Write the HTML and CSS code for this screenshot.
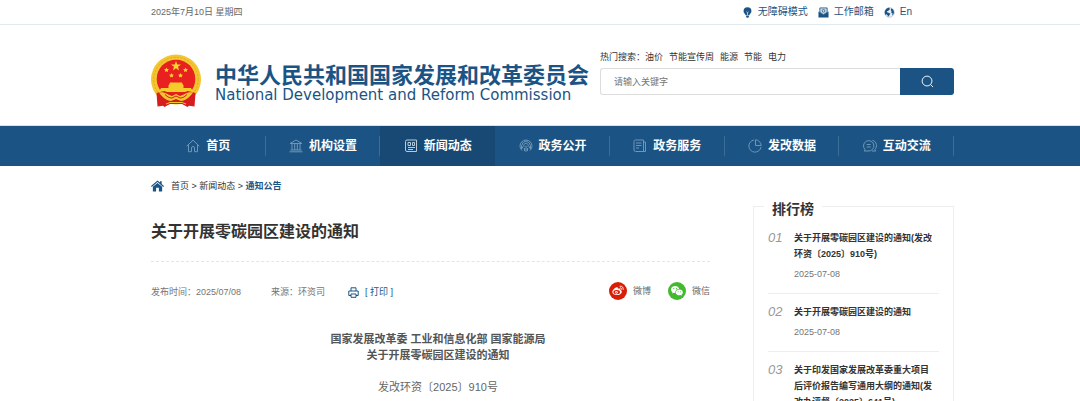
FILE: index.html
```html
<!DOCTYPE html>
<html lang="zh-CN">
<head>
<meta charset="utf-8">
<title>关于开展零碳园区建设的通知</title>
<link rel="stylesheet" href="styles.css">
</head>
<body>
<div class="topbar">
  <div class="wrap topbar-row">
    <span class="date">2025年7月10日 星期四</span>
    <div class="tools">
      <a href="#"><svg class="tool-icon" viewBox="0 0 12 12"><path fill="#1b5484" d="M6 .3a4.300 4.300 0 0 0-4.300 4.300C1.700 6.500 3.500 7.300 4 9h4c.5-1.700 2.300-2.500 2.300-4.400A4.300 4.300 0 0 0 6 .3zM4.500 9.500h3v1L6.800 11.800H5.200l-.7-1.300z"/><path stroke="#fff" stroke-width=".7" fill="none" d="M6 8.800V6M4.800 5.200 6 6.200l1.200-1"/></svg>无障碍模式</a>
      <a href="#"><svg class="tool-icon" viewBox="0 0 12 12"><path fill="#1b5484" d="M.5 5 6 8.500 11.500 5v6.500H.500z"/><path fill="#cfdde8" stroke="#1b5484" stroke-width=".9" d="M2 5.800V1h8v4.800L6 8.200z"/><circle cx="6" cy="4.200" r="1.500" fill="none" stroke="#1b5484" stroke-width=".8"/></svg>工作邮箱</a>
      <a href="#"><svg class="tool-icon" viewBox="0 0 12 12"><circle cx="6" cy="6" r="5.200" fill="#e4edf4" stroke="#8eabc3" stroke-width=".6"/><path fill="#1b5484" d="M5.800.700C3 .6.800 3 .8 6c0 1 .3 2 .8 2.700L3 8l1 1 .2 1.800 1.400-1.500L7 7.400 5 6.200 3.700 6 3 4.800l1.700-.6L6.400 2.500zM8 1.400l-.7 1.800 1 1.300-.6 1.400 1.500.8-.2 2.500 1.300-1.400A5 5 0 0 0 8 1.400z"/></svg>En</a>
    </div>
  </div>
</div>

<header class="wrap header">
  <a class="brand" href="#">
    <svg class="emblem" viewBox="0 0 50 54" aria-hidden="true">
      <circle cx="25" cy="25.500" r="25" fill="#f3c52f"/>
      <circle cx="25" cy="25.500" r="22.200" fill="none" stroke="#e3ab22" stroke-width="1" stroke-dasharray="2 1.500"/>
      <circle cx="25" cy="25" r="19.300" fill="#e8201f"/>
      <path fill="#f8d72e" d="m25 7 1.250 3.500 3.750.1-3 2.250 1.100 3.550L25 14.300l-3.100 2.100 1.100-3.550-3-2.250 3.750-.1z"/>
      <g fill="#f8d72e">
        <path id="star" d="m15.500 13.500.7 1.500 1.700.2-1.200 1.200.3 1.700-1.500-.8-1.500.8.3-1.700-1.200-1.200 1.700-.2z"/>
        <use href="#star" x="19"/><use href="#star" x="5" y="5.500"/><use href="#star" x="14" y="5.500"/>
      </g>
      <path fill="#f6cb2c" d="M19 28.500h12l1 2.500H18zM17.500 31h15v3h-15zM10 34h30l2 4H8z"/>
      <path fill="#d71d1d" d="M5.500 39 13 37l12 4 12-4 7.500 2-1 13.500-5.500-.7-1.500 1.200-5.500-3H19l-5.500 3-1.500-1.200-5.500.7z"/>
      <path fill="#f3c52f" d="M8 38.500c6-1 9 2.500 13 3.500l4-2 4 2c4-1 7-4.500 13-3.500-3 5-8 8-12 8.500l-5-2-5 2C16 46.500 11 43.500 8 38.500z"/>
      <path fill="none" stroke="#d71d1d" stroke-width="1" d="M14 40.500c3 3 5 3.500 7 3.500l4-2 4 2c2 0 4-.5 7-3.500"/>
      <path fill="none" stroke="#f3c52f" stroke-width="1" d="M15 50l4-1.500h12l4 1.500"/>
    </svg>
    <span class="brand-text">
      <span class="brand-cn">中华人民共和国国家发展和改革委员会</span>
      <span class="brand-en" lang="en">National Development and Reform Commission</span>
    </span>
  </a>
  <div class="search">
    <div class="hot"><span>热门搜索：</span><a href="#">油价</a><a href="#">节能宣传周</a><a href="#">能源</a><a href="#">节能</a><a href="#">电力</a></div>
    <form class="search-form">
      <input class="search-input" type="text" placeholder="请输入关键字" aria-label="请输入关键字">
      <button class="search-button" type="button" aria-label="搜索"><svg viewBox="0 0 14 14"><circle cx="6.500" cy="6.500" r="5.300"/><path d="m10.300 10.300 2.700 2.700"/></svg></button>
    </form>
  </div>
</header>

<nav class="nav">
  <div class="wrap nav-row">
    <a class="nav-item" href="#"><svg class="nav-icon" viewBox="0 0 14 14"><path d="M.7 7.200 7 1.200l6.300 6M2.500 6v6.700h3V9a1.500 1.500 0 0 1 3 0v3.700h3V6"/></svg>首页</a>
    <a class="nav-item" href="#"><svg class="nav-icon" viewBox="0 0 14 14"><path d="M1 4.500 7 1l6 3.500zM.5 12.800h13M1.500 11h11M3 5v6M5.700 5v6M8.300 5v6M11 5v6"/></svg>机构设置</a>
    <a class="nav-item active" href="#"><svg class="nav-icon" viewBox="0 0 14 14"><path d="M3 1h9.500v11.500H3A1.500 1.500 0 0 1 1.500 11V2.500A1.500 1.500 0 0 1 3 1zM4 3.500h2.500v3H4zM8.500 3.500h2v3h-2zM4 8.500h7M4 10.500h5"/></svg>新闻动态</a>
    <a class="nav-item" href="#"><svg class="nav-icon" viewBox="0 0 14 14"><path d="M3 11.500a6 6 0 1 1 8 0M4 9.500a4.200 4.200 0 1 1 6 0M5.200 8a2.300 2.300 0 1 1 3.600 0M7 6.500V13M5.500 9v3M8.500 9v3M2.500 7v3M11.500 7v3"/></svg>政务公开</a>
    <a class="nav-item" href="#"><svg class="nav-icon" viewBox="0 0 14 14"><path d="M2.500 1h8v11.500h-8A1.500 1.500 0 0 1 1 11V2.500A1.500 1.500 0 0 1 2.500 1zM10.500 3h2v9.500h-3M3 4h5.500M3 6.500h5.500M3 9h3"/></svg>政务服务</a>
    <a class="nav-item" href="#"><svg class="nav-icon" viewBox="0 0 14 14"><path d="M6 1a6.100 6.100 0 1 0 7 7M7.500.8v5.700h5.700A6 6 0 0 0 7.500.8z"/></svg>发改数据</a>
    <a class="nav-item" href="#"><svg class="nav-icon" viewBox="0 0 14 14"><path d="M2 10.500A5.200 5.200 0 1 1 5 12H1.200zM9.500 1.300c4.500 1.200 5 6.700 2.500 9l.8 1.700H9M3.700 5.500h4M3.700 8h4"/></svg>互动交流</a>
  </div>
</nav>

<main class="wrap page">
  <article class="article">
    <div class="crumbs">
      <svg class="home-icon" viewBox="0 0 14 12"><path fill="#1b5484" d="M7 0 0 6l.8 1L7 1.800 13.200 7l.8-1-2.500-2.200V.8H9.700v1.500zM7 2.800l-5 4.100V12h3.500V8h3v4H12V6.900z"/></svg>
      <span><a href="#">首页</a> &gt; <a href="#">新闻动态</a> &gt; <a class="current" href="#">通知公告</a></span>
    </div>
    <h1 class="title">关于开展零碳园区建设的通知</h1>
    <div class="meta">
      <span class="published">发布时间：2025/07/08</span>
      <span class="source">来源：环资司</span>
      <a class="print" href="#"><svg class="print-icon" viewBox="0 0 11 11"><path d="M3 4V.8h5V4M3 8.500H.8V4h9.400v4.500H8M3 7h5v3.300H3z"/></svg>[ 打印 ]</a>
      <div class="share">
        <a href="#"><svg class="share-icon" viewBox="0 0 18 18"><circle cx="9" cy="9" r="9" fill="#d81e06"/><path fill="#fff" d="M7.600 5.300c1-.3 1.600.3 1.300 1.400 1.700-.6 2.900-.1 2.400 1.300 1 .3 1.600 1 1.500 1.900-.2 1.800-2.500 3.200-5 3.200-2.400 0-4.500-1.100-4.500-3 0-1.700 2.300-4.400 4.300-4.800z"/><ellipse cx="7.700" cy="10.100" rx="3.300" ry="2.200" fill="#d81e06"/><circle cx="7.400" cy="10.300" r="1.400" fill="#fff"/><circle cx="7.200" cy="10.500" r=".6" fill="#d81e06"/><path fill="none" stroke="#fff" stroke-width=".9" stroke-linecap="round" d="M11 4.200c2-.4 3.700 1.200 3.200 3.300M11.300 5.900c1-.1 1.500.5 1.300 1.300"/></svg>微博</a>
        <a href="#"><svg class="share-icon" viewBox="0 0 18 18"><circle cx="9" cy="9" r="9" fill="#43b92f"/><path fill="#fff" d="M7.200 4C4.800 4 3 5.500 3 7.500c0 1.100.6 2 1.500 2.700L4.200 11.500l1.500-.8c.6.2 1.200.2 1.700.2C7 8.300 8.800 6.900 11.200 7 10.800 5.200 9.200 4 7.200 4z"/><path fill="#fff" d="M11.300 7.500c-2 0-3.500 1.300-3.500 2.900s1.500 2.900 3.500 2.900l1.200-.2 1.300.7-.3-1.200c.8-.5 1.300-1.300 1.300-2.200 0-1.600-1.500-2.900-3.500-2.900z"/><g fill="#43b92f"><circle cx="5.800" cy="6.600" r=".6"/><circle cx="8.600" cy="6.600" r=".6"/><circle cx="10.200" cy="9.700" r=".5"/><circle cx="12.500" cy="9.700" r=".5"/></g></svg>微信</a>
      </div>
    </div>
    <div class="body">
      <p class="heading">国家发展改革委 工业和信息化部 国家能源局<br>关于开展零碳园区建设的通知</p>
      <p class="number">发改环资〔2025〕910号</p>
    </div>
  </article>

  <aside class="ranking">
    <h2 class="ranking-title">排行榜</h2>
    <ol class="ranking-list">
      <li><span class="rank">01</span><div class="entry"><a href="#">关于开展零碳园区建设的通知(发改环资〔2025〕910号)</a><time>2025-07-08</time></div></li>
      <li><span class="rank">02</span><div class="entry"><a href="#">关于开展零碳园区建设的通知</a><time>2025-07-08</time></div></li>
      <li><span class="rank">03</span><div class="entry"><a href="#">关于印发国家发展改革委重大项目后评价报告编写通用大纲的通知(发改办评督〔2025〕641号)</a></div></li>
    </ol>
  </aside>
</main>
</body>
</html>
```
FILE: styles.css
```css
* {
  box-sizing: border-box;
}

body {
  display: flex;
  flex-direction: column;
  height: 100vh;
  margin: 0;
  overflow: hidden;
  background: #fff;
  color: #333;
  font: 9px/16px "Liberation Sans", "Noto Sans CJK SC", sans-serif;
}

a {
  color: inherit;
  text-decoration: none;
}

svg {
  flex: none;
}

.topbar,
.nav,
.header,
.page {
  flex: none;
}

.wrap {
  width: 100%;
  max-width: 828px;
  margin: 0 auto;
  padding-left: 25px;
}

.topbar {
  border-bottom: 1px solid #e0eaf1;
}

.topbar-row {
  display: flex;
  align-items: center;
  justify-content: space-between;
  height: 24px;
}

.date {
  color: #666;
}

.tools {
  display: flex;
  gap: 10px;
  padding-right: 42px;
  color: #1b5484;
  font-size: 10px;
}

.tools a {
  display: flex;
  align-items: center;
  gap: 5px;
}

.tool-icon {
  width: 11px;
  height: 11px;
}

.header {
  display: flex;
  justify-content: space-between;
  height: 100px;
}

.brand {
  display: flex;
  align-items: flex-start;
  gap: 14px;
  padding-top: 29px;
  color: #1b5484;
  white-space: nowrap;
}

.emblem {
  width: 50px;
  height: 54px;
}

.brand-text {
  display: flex;
  flex-direction: column;
  padding-top: 10px;
}

.brand-cn {
  font-size: 22px;
  font-weight: 700;
  line-height: 24px;
}

.brand-en {
  font-family: "DejaVu Sans", sans-serif;
  font-size: 15px;
  line-height: 14px;
}

.search {
  width: 354px;
  padding-top: 24px;
}

.hot {
  display: flex;
  gap: 6px;
}

.hot span {
  margin-right: -6px;
}

.search-form {
  display: flex;
  height: 27px;
  margin-top: 3px;
}

.search-input {
  flex: 1;
  min-width: 0;
  padding: 0 13px;
  border: 1px solid #ddd;
  border-right: 0;
  border-radius: 3px 0 0 3px;
  font: inherit;
}

.search-input::placeholder {
  color: #757575;
}

.search-button {
  display: flex;
  align-items: center;
  justify-content: center;
  width: 54px;
  padding: 0;
  border: 0;
  border-radius: 0 3px 3px 0;
  background: #1b5484;
}

.search-button svg {
  width: 13px;
  height: 13px;
  fill: none;
  stroke: #fff;
  stroke-width: 1;
}

.nav {
  border-top: 1px solid #d7e4ec;
  background: #1b5484;
}

.nav-row {
  display: flex;
  height: 40px;
}

.nav-item {
  display: flex;
  flex: 1;
  align-items: center;
  justify-content: center;
  gap: 6px;
  background: linear-gradient(#3b6d97, #3b6d97) right center / 1px 20px no-repeat;
  color: #fff;
  font-size: 12px;
  font-weight: 700;
}

.nav-item.active {
  background: #174974;
}

.nav-icon {
  width: 14px;
  height: 14px;
  fill: none;
  stroke: #6e96b7;
  stroke-width: 1;
}

.active .nav-icon {
  stroke: #b5cadb;
}

.page {
  display: flex;
  align-items: flex-start;
  justify-content: space-between;
  gap: 43px;
}

.article {
  flex: 1;
}

.crumbs {
  display: flex;
  align-items: center;
  gap: 7px;
  padding-top: 12px;
}

.home-icon {
  width: 13px;
  height: 12px;
}

.current {
  color: #1b5484;
  font-weight: 700;
}

.title {
  margin: 0;
  padding: 26px 0 17px;
  border-bottom: 1px dashed #e5e5e5;
  font-size: 16px;
  line-height: 24px;
}

.meta {
  display: flex;
  align-items: flex-end;
  margin-top: 20px;
  color: #757575;
}

.published {
  margin-right: 30px;
}

.source {
  margin-right: 23px;
}

.print {
  display: flex;
  align-items: center;
  gap: 6px;
  color: #1b5484;
}

.print-icon {
  width: 11px;
  height: 11px;
  fill: none;
  stroke: #1b5484;
  stroke-width: 1;
}

.share {
  display: flex;
  gap: 17px;
  margin-left: auto;
  color: #666;
}

.share a {
  display: flex;
  align-items: center;
  gap: 6px;
}

.share-icon {
  width: 18px;
  height: 18px;
}

.body {
  padding: 31px 0 0 15px;
  color: #666;
  font-size: 11px;
  text-align: center;
}

.body p {
  margin: 0 0 16px;
}

.body .heading {
  color: #555;
  font-weight: 700;
}

.ranking {
  width: 201px;
  margin-top: 40px;
  border: 1px solid #eee;
}

.ranking-title {
  width: max-content;
  margin: -9px 0 0 10px;
  padding: 0 8px;
  background: #fff;
  font-size: 14px;
  line-height: 22px;
}

.ranking-list {
  margin: 0;
  padding: 0 14px;
  list-style: none;
}

.ranking-list li {
  display: grid;
  grid-template-columns: 26px 1fr;
  padding: 10px 0 11px;
  border-bottom: 1px solid #eee;
}

.rank {
  color: #999;
  font-size: 13px;
  font-style: italic;
}

.entry {
  padding-right: 4px;
}

.entry a {
  display: block;
  font-weight: 700;
}

.entry time {
  display: block;
  margin-top: 4px;
  color: #757575;
}
```
